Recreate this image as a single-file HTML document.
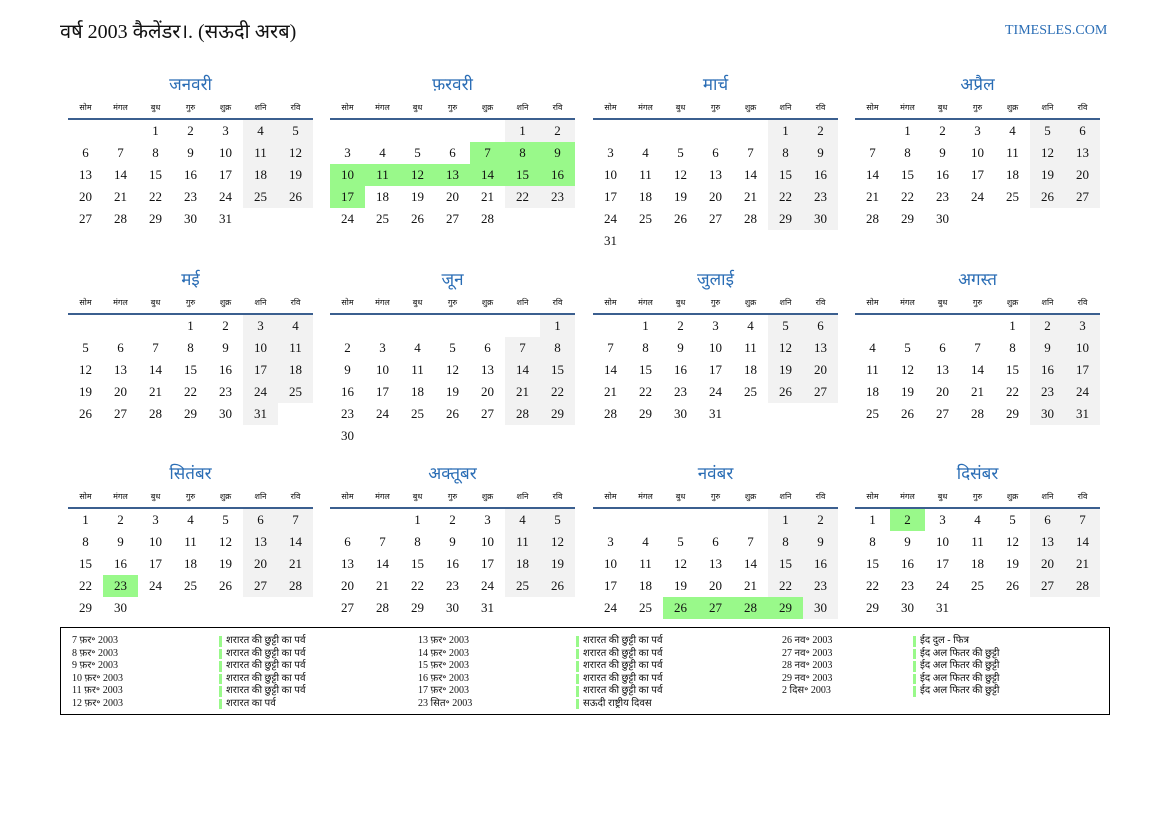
<!DOCTYPE html>
<html><head><meta charset="utf-8">
<style>
body{margin:0;width:1169px;height:827px;background:#fff;position:relative;font-family:"Liberation Serif","DejaVu Serif",serif;color:#111;overflow:hidden}
.t{position:absolute;left:60px;top:18px;font-size:20px;line-height:28px}
.s{position:absolute;left:1005px;top:23px;font-size:14px;color:#2a6db5}
.m{position:absolute;width:245px}
.m h{display:block;text-align:center;height:24px;line-height:26px;font-size:17px;color:#2a6db5}
table{border-collapse:collapse;table-layout:fixed;width:245px}
th{width:35px;height:22px;font-size:8px;font-weight:normal;border-bottom:2px solid #3b5f8f;padding:0}
td{width:35px;height:22px;padding:0;text-align:center;font-size:13px}
.w{background:#f2f2f2}
.g{background:#99f98a}
.lg{position:absolute;left:60px;top:627px;width:1048px;height:86px;border:1px solid #000}
.r{position:absolute;font-size:10px;line-height:12.6px;white-space:nowrap}
.b{position:relative;padding-left:7px;height:12.6px}
.b:before{content:"";position:absolute;left:0;top:1px;width:3px;height:10.5px;background:#99f98a}
</style></head><body>
<div class="t">वर्ष 2003 कैलेंडर।. (सऊदी अरब)</div>
<div class="s">TIMESLES.COM</div>

<div class="m" style="left:68px;top:72px"><h>जनवरी</h><table><tr><th>सोम</th><th>मंगल</th><th>बुध</th><th>गुरु</th><th>शुक्र</th><th>शनि</th><th>रवि</th></tr>
<tr><td></td><td></td><td>1</td><td>2</td><td>3</td><td class=w>4</td><td class=w>5</td></tr>
<tr><td>6</td><td>7</td><td>8</td><td>9</td><td>10</td><td class=w>11</td><td class=w>12</td></tr>
<tr><td>13</td><td>14</td><td>15</td><td>16</td><td>17</td><td class=w>18</td><td class=w>19</td></tr>
<tr><td>20</td><td>21</td><td>22</td><td>23</td><td>24</td><td class=w>25</td><td class=w>26</td></tr>
<tr><td>27</td><td>28</td><td>29</td><td>30</td><td>31</td><td></td><td></td></tr></table></div>

<div class="m" style="left:330px;top:72px"><h>फ़रवरी</h><table><tr><th>सोम</th><th>मंगल</th><th>बुध</th><th>गुरु</th><th>शुक्र</th><th>शनि</th><th>रवि</th></tr>
<tr><td></td><td></td><td></td><td></td><td></td><td class=w>1</td><td class=w>2</td></tr>
<tr><td>3</td><td>4</td><td>5</td><td>6</td><td class=g>7</td><td class=g>8</td><td class=g>9</td></tr>
<tr><td class=g>10</td><td class=g>11</td><td class=g>12</td><td class=g>13</td><td class=g>14</td><td class=g>15</td><td class=g>16</td></tr>
<tr><td class=g>17</td><td>18</td><td>19</td><td>20</td><td>21</td><td class=w>22</td><td class=w>23</td></tr>
<tr><td>24</td><td>25</td><td>26</td><td>27</td><td>28</td><td></td><td></td></tr></table></div>

<div class="m" style="left:593px;top:72px"><h>मार्च</h><table><tr><th>सोम</th><th>मंगल</th><th>बुध</th><th>गुरु</th><th>शुक्र</th><th>शनि</th><th>रवि</th></tr>
<tr><td></td><td></td><td></td><td></td><td></td><td class=w>1</td><td class=w>2</td></tr>
<tr><td>3</td><td>4</td><td>5</td><td>6</td><td>7</td><td class=w>8</td><td class=w>9</td></tr>
<tr><td>10</td><td>11</td><td>12</td><td>13</td><td>14</td><td class=w>15</td><td class=w>16</td></tr>
<tr><td>17</td><td>18</td><td>19</td><td>20</td><td>21</td><td class=w>22</td><td class=w>23</td></tr>
<tr><td>24</td><td>25</td><td>26</td><td>27</td><td>28</td><td class=w>29</td><td class=w>30</td></tr>
<tr><td>31</td><td></td><td></td><td></td><td></td><td></td><td></td></tr></table></div>

<div class="m" style="left:855px;top:72px"><h>अप्रैल</h><table><tr><th>सोम</th><th>मंगल</th><th>बुध</th><th>गुरु</th><th>शुक्र</th><th>शनि</th><th>रवि</th></tr>
<tr><td></td><td>1</td><td>2</td><td>3</td><td>4</td><td class=w>5</td><td class=w>6</td></tr>
<tr><td>7</td><td>8</td><td>9</td><td>10</td><td>11</td><td class=w>12</td><td class=w>13</td></tr>
<tr><td>14</td><td>15</td><td>16</td><td>17</td><td>18</td><td class=w>19</td><td class=w>20</td></tr>
<tr><td>21</td><td>22</td><td>23</td><td>24</td><td>25</td><td class=w>26</td><td class=w>27</td></tr>
<tr><td>28</td><td>29</td><td>30</td><td></td><td></td><td></td><td></td></tr></table></div>

<div class="m" style="left:68px;top:267px"><h>मई</h><table><tr><th>सोम</th><th>मंगल</th><th>बुध</th><th>गुरु</th><th>शुक्र</th><th>शनि</th><th>रवि</th></tr>
<tr><td></td><td></td><td></td><td>1</td><td>2</td><td class=w>3</td><td class=w>4</td></tr>
<tr><td>5</td><td>6</td><td>7</td><td>8</td><td>9</td><td class=w>10</td><td class=w>11</td></tr>
<tr><td>12</td><td>13</td><td>14</td><td>15</td><td>16</td><td class=w>17</td><td class=w>18</td></tr>
<tr><td>19</td><td>20</td><td>21</td><td>22</td><td>23</td><td class=w>24</td><td class=w>25</td></tr>
<tr><td>26</td><td>27</td><td>28</td><td>29</td><td>30</td><td class=w>31</td><td></td></tr></table></div>

<div class="m" style="left:330px;top:267px"><h>जून</h><table><tr><th>सोम</th><th>मंगल</th><th>बुध</th><th>गुरु</th><th>शुक्र</th><th>शनि</th><th>रवि</th></tr>
<tr><td></td><td></td><td></td><td></td><td></td><td></td><td class=w>1</td></tr>
<tr><td>2</td><td>3</td><td>4</td><td>5</td><td>6</td><td class=w>7</td><td class=w>8</td></tr>
<tr><td>9</td><td>10</td><td>11</td><td>12</td><td>13</td><td class=w>14</td><td class=w>15</td></tr>
<tr><td>16</td><td>17</td><td>18</td><td>19</td><td>20</td><td class=w>21</td><td class=w>22</td></tr>
<tr><td>23</td><td>24</td><td>25</td><td>26</td><td>27</td><td class=w>28</td><td class=w>29</td></tr>
<tr><td>30</td><td></td><td></td><td></td><td></td><td></td><td></td></tr></table></div>

<div class="m" style="left:593px;top:267px"><h>जुलाई</h><table><tr><th>सोम</th><th>मंगल</th><th>बुध</th><th>गुरु</th><th>शुक्र</th><th>शनि</th><th>रवि</th></tr>
<tr><td></td><td>1</td><td>2</td><td>3</td><td>4</td><td class=w>5</td><td class=w>6</td></tr>
<tr><td>7</td><td>8</td><td>9</td><td>10</td><td>11</td><td class=w>12</td><td class=w>13</td></tr>
<tr><td>14</td><td>15</td><td>16</td><td>17</td><td>18</td><td class=w>19</td><td class=w>20</td></tr>
<tr><td>21</td><td>22</td><td>23</td><td>24</td><td>25</td><td class=w>26</td><td class=w>27</td></tr>
<tr><td>28</td><td>29</td><td>30</td><td>31</td><td></td><td></td><td></td></tr></table></div>

<div class="m" style="left:855px;top:267px"><h>अगस्त</h><table><tr><th>सोम</th><th>मंगल</th><th>बुध</th><th>गुरु</th><th>शुक्र</th><th>शनि</th><th>रवि</th></tr>
<tr><td></td><td></td><td></td><td></td><td>1</td><td class=w>2</td><td class=w>3</td></tr>
<tr><td>4</td><td>5</td><td>6</td><td>7</td><td>8</td><td class=w>9</td><td class=w>10</td></tr>
<tr><td>11</td><td>12</td><td>13</td><td>14</td><td>15</td><td class=w>16</td><td class=w>17</td></tr>
<tr><td>18</td><td>19</td><td>20</td><td>21</td><td>22</td><td class=w>23</td><td class=w>24</td></tr>
<tr><td>25</td><td>26</td><td>27</td><td>28</td><td>29</td><td class=w>30</td><td class=w>31</td></tr></table></div>

<div class="m" style="left:68px;top:461px"><h>सितंबर</h><table><tr><th>सोम</th><th>मंगल</th><th>बुध</th><th>गुरु</th><th>शुक्र</th><th>शनि</th><th>रवि</th></tr>
<tr><td>1</td><td>2</td><td>3</td><td>4</td><td>5</td><td class=w>6</td><td class=w>7</td></tr>
<tr><td>8</td><td>9</td><td>10</td><td>11</td><td>12</td><td class=w>13</td><td class=w>14</td></tr>
<tr><td>15</td><td>16</td><td>17</td><td>18</td><td>19</td><td class=w>20</td><td class=w>21</td></tr>
<tr><td>22</td><td class=g>23</td><td>24</td><td>25</td><td>26</td><td class=w>27</td><td class=w>28</td></tr>
<tr><td>29</td><td>30</td><td></td><td></td><td></td><td></td><td></td></tr></table></div>

<div class="m" style="left:330px;top:461px"><h>अक्तूबर</h><table><tr><th>सोम</th><th>मंगल</th><th>बुध</th><th>गुरु</th><th>शुक्र</th><th>शनि</th><th>रवि</th></tr>
<tr><td></td><td></td><td>1</td><td>2</td><td>3</td><td class=w>4</td><td class=w>5</td></tr>
<tr><td>6</td><td>7</td><td>8</td><td>9</td><td>10</td><td class=w>11</td><td class=w>12</td></tr>
<tr><td>13</td><td>14</td><td>15</td><td>16</td><td>17</td><td class=w>18</td><td class=w>19</td></tr>
<tr><td>20</td><td>21</td><td>22</td><td>23</td><td>24</td><td class=w>25</td><td class=w>26</td></tr>
<tr><td>27</td><td>28</td><td>29</td><td>30</td><td>31</td><td></td><td></td></tr></table></div>

<div class="m" style="left:593px;top:461px"><h>नवंबर</h><table><tr><th>सोम</th><th>मंगल</th><th>बुध</th><th>गुरु</th><th>शुक्र</th><th>शनि</th><th>रवि</th></tr>
<tr><td></td><td></td><td></td><td></td><td></td><td class=w>1</td><td class=w>2</td></tr>
<tr><td>3</td><td>4</td><td>5</td><td>6</td><td>7</td><td class=w>8</td><td class=w>9</td></tr>
<tr><td>10</td><td>11</td><td>12</td><td>13</td><td>14</td><td class=w>15</td><td class=w>16</td></tr>
<tr><td>17</td><td>18</td><td>19</td><td>20</td><td>21</td><td class=w>22</td><td class=w>23</td></tr>
<tr><td>24</td><td>25</td><td class=g>26</td><td class=g>27</td><td class=g>28</td><td class=g>29</td><td class=w>30</td></tr></table></div>

<div class="m" style="left:855px;top:461px"><h>दिसंबर</h><table><tr><th>सोम</th><th>मंगल</th><th>बुध</th><th>गुरु</th><th>शुक्र</th><th>शनि</th><th>रवि</th></tr>
<tr><td>1</td><td class=g>2</td><td>3</td><td>4</td><td>5</td><td class=w>6</td><td class=w>7</td></tr>
<tr><td>8</td><td>9</td><td>10</td><td>11</td><td>12</td><td class=w>13</td><td class=w>14</td></tr>
<tr><td>15</td><td>16</td><td>17</td><td>18</td><td>19</td><td class=w>20</td><td class=w>21</td></tr>
<tr><td>22</td><td>23</td><td>24</td><td>25</td><td>26</td><td class=w>27</td><td class=w>28</td></tr>
<tr><td>29</td><td>30</td><td>31</td><td></td><td></td><td></td><td></td></tr></table></div>

<div class="lg"></div>
<div class="r" style="left:72px;top:635px">7 फ़र॰ 2003<br>8 फ़र॰ 2003<br>9 फ़र॰ 2003<br>10 फ़र॰ 2003<br>11 फ़र॰ 2003<br>12 फ़र॰ 2003</div>
<div class="r" style="left:219px;top:635px"><div class=b>शरारत की छुट्टी का पर्व</div><div class=b>शरारत की छुट्टी का पर्व</div><div class=b>शरारत की छुट्टी का पर्व</div><div class=b>शरारत की छुट्टी का पर्व</div><div class=b>शरारत की छुट्टी का पर्व</div><div class=b>शरारत का पर्व</div></div>
<div class="r" style="left:418px;top:635px">13 फ़र॰ 2003<br>14 फ़र॰ 2003<br>15 फ़र॰ 2003<br>16 फ़र॰ 2003<br>17 फ़र॰ 2003<br>23 सित॰ 2003</div>
<div class="r" style="left:576px;top:635px"><div class=b>शरारत की छुट्टी का पर्व</div><div class=b>शरारत की छुट्टी का पर्व</div><div class=b>शरारत की छुट्टी का पर्व</div><div class=b>शरारत की छुट्टी का पर्व</div><div class=b>शरारत की छुट्टी का पर्व</div><div class=b>सऊदी राष्ट्रीय दिवस</div></div>
<div class="r" style="left:782px;top:635px">26 नव॰ 2003<br>27 नव॰ 2003<br>28 नव॰ 2003<br>29 नव॰ 2003<br>2 दिस॰ 2003</div>
<div class="r" style="left:913px;top:635px"><div class=b>ईद दुल - फित्र</div><div class=b>ईद अल फितर की छुट्टी</div><div class=b>ईद अल फितर की छुट्टी</div><div class=b>ईद अल फितर की छुट्टी</div><div class=b>ईद अल फितर की छुट्टी</div></div>
</body></html>
